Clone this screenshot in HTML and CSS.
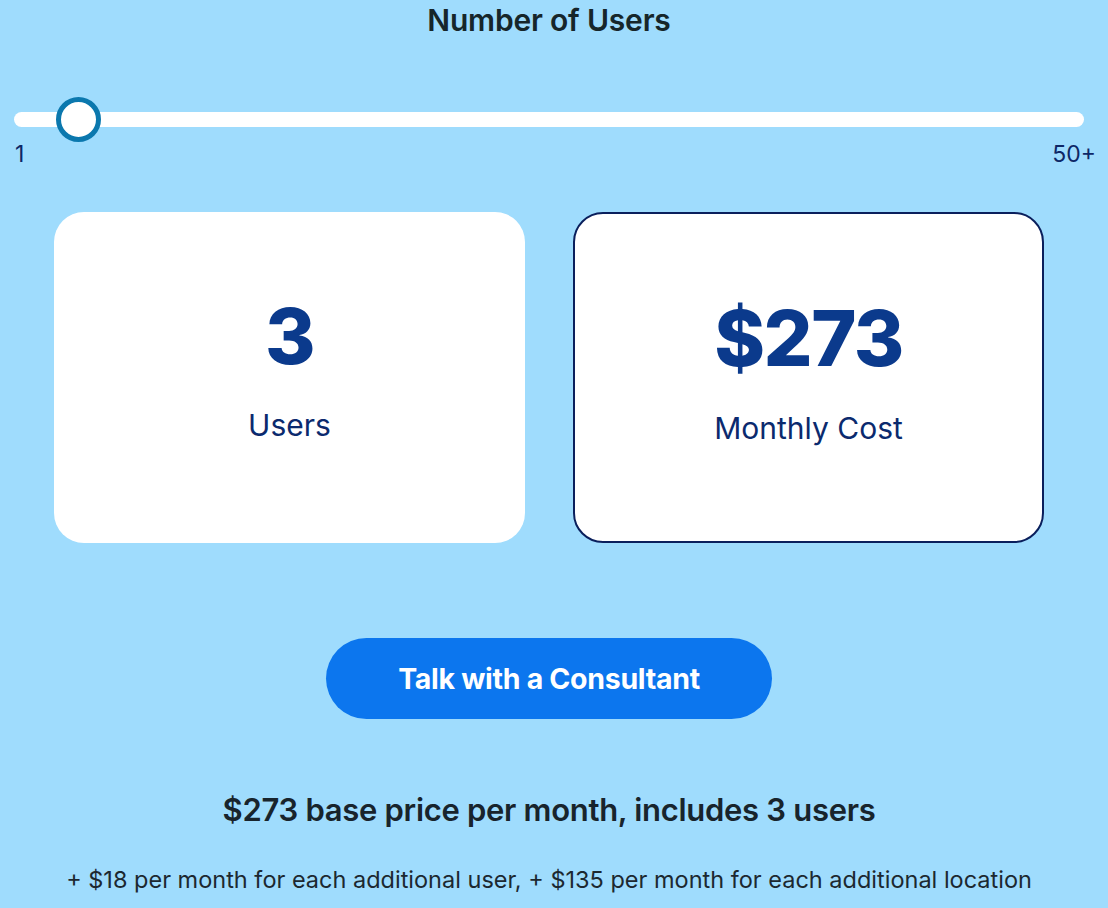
FILE: index.html
```html
<!DOCTYPE html>
<html lang="en">
<head>
  <meta charset="UTF-8">
  <title>Pricing Calculator</title>
  <link rel="stylesheet" href="styles.css">
</head>
<body>
<div class="calc">
  <h2 class="calc-title">Number of Users</h2>

  <div class="slider">
    <div class="track">
      <span class="thumb"></span>
    </div>
    <div class="range-labels">
      <span>1</span>
      <span>50+</span>
    </div>
  </div>

  <div class="cards">
    <div class="card">
      <div class="card-num">3</div>
      <div class="card-label">Users</div>
    </div>
    <div class="card card-total">
      <div class="card-num">$273</div>
      <div class="card-label">Monthly Cost</div>
    </div>
  </div>

  <div class="cta">
    <a class="btn" href="#">Talk with a Consultant</a>
  </div>

  <p class="summary">$273 base price per month, includes 3 users</p>
  <p class="extra">+ $18 per month for each additional user, + $135 per month for each additional location</p>
</div>
</body>
</html>
```

FILE: styles.css
```css
* {
  margin: 0;
  padding: 0;
  box-sizing: border-box;
}

body {
  background: #9fdcfd;
  font-family: Inter, "Noto Sans", sans-serif;
  color: #18242c;
}

.calc {
  width: 1108px;
  height: 908px;
  overflow: hidden;
  padding: 0 24px 0 14px;
}

.calc-title {
  text-align: center;
  font-size: 30px;
  font-weight: 600;
  line-height: 40px;
  color: #16262a;
  letter-spacing: -0.2px;
}

.slider {
  margin-top: 72px;
}

.track {
  position: relative;
  height: 15px;
  background: #fff;
  border-radius: 8px;
}

.thumb {
  position: absolute;
  left: 42px;
  top: -15px;
  width: 45px;
  height: 45px;
  border-radius: 50%;
  background: #fff;
  border: 5px solid #0b78ae;
}

.range-labels {
  display: flex;
  justify-content: space-between;
  margin-top: 12px;
  margin-right: -12px;
  font-size: 23px;
  line-height: 30px;
  color: #0d2766;
  padding-left: 1px;
}

.cards {
  display: flex;
  justify-content: center;
  gap: 48px;
  margin-top: 43px;
}

.card {
  width: 471px;
  height: 331px;
  background: #fff;
  border-radius: 30px;
  display: flex;
  flex-direction: column;
  align-items: center;
  padding-top: 74px;
}

.card-total {
  border: 2px solid #0a1f5c;
}

.card-num {
  font-size: 77px;
  font-weight: 800;
  line-height: 100px;
  color: #0b3a8c;
  letter-spacing: -1.5px;
}

.card-label {
  margin-top: 21px;
  font-size: 30px;
  line-height: 36px;
  color: #0b2a6e;
}

.card-total .card-label {
  margin-top: 22px;
}

.cta {
  display: flex;
  justify-content: center;
  margin-top: 95px;
}

.btn {
  display: flex;
  align-items: center;
  justify-content: center;
  width: 446px;
  height: 81px;
  border-radius: 41px;
  background: #0c76ee;
  color: #fff;
  font-size: 28.5px;
  font-weight: 700;
  text-decoration: none;
  letter-spacing: -0.3px;
}

.summary {
  margin-top: 70px;
  text-align: center;
  font-size: 31px;
  font-weight: 600;
  line-height: 42px;
  color: #18242c;
  letter-spacing: -0.3px;
}

.extra {
  margin-top: 33px;
  text-align: center;
  font-size: 23.5px;
  line-height: 32px;
  color: #1c2830;
}
```
